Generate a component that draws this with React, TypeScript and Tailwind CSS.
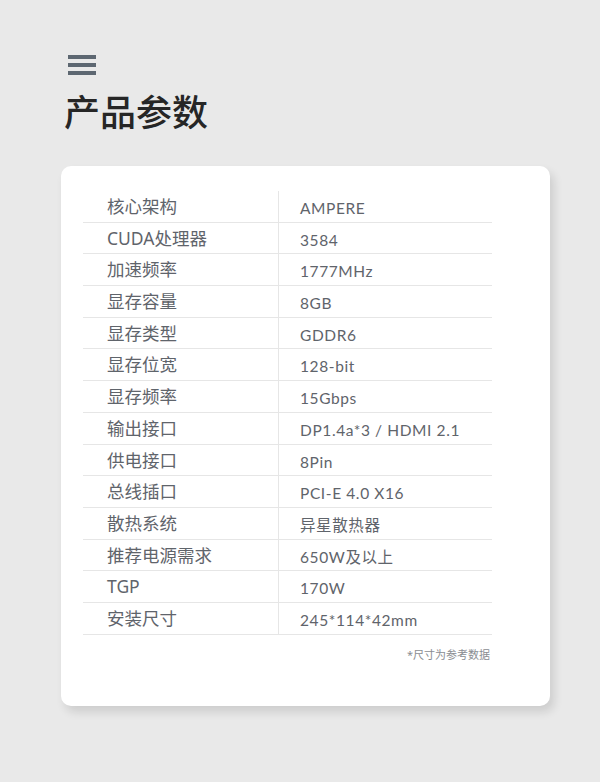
const specs: [string, string][] = [
  ["核心架构", "AMPERE"],
  ["CUDA处理器", "3584"],
  ["加速频率", "1777MHz"],
  ["显存容量", "8GB"],
  ["显存类型", "GDDR6"],
  ["显存位宽", "128-bit"],
  ["显存频率", "15Gbps"],
  ["输出接口", "DP1.4a*3 / HDMI 2.1"],
  ["供电接口", "8Pin"],
  ["总线插口", "PCI-E 4.0 X16"],
  ["散热系统", "异星散热器"],
  ["推荐电源需求", "650W及以上"],
  ["TGP", "170W"],
  ["安装尺寸", "245*114*42mm"],
];

export default function App() {
  return (
    <div
      className="w-[600px] h-[782px] bg-[#e9e9e9] pt-[55px] px-[61px]"
      style={{ fontFamily: '"Noto Sans", "Noto Sans CJK SC", sans-serif' }}
    >
      <div className="flex flex-col gap-[4px] w-[28px] ml-[7px]">
        <span className="block h-[4px] bg-[#5d6771]" />
        <span className="block h-[4px] bg-[#5d6771]" />
        <span className="block h-[4px] bg-[#5d6771]" />
      </div>
      <h1 className="mt-[16px] ml-[3px] text-[36px] leading-[44px] font-medium text-[#262626]">
        产品参数
      </h1>
      <div className="mt-[31px] w-[489px] h-[540px] bg-white rounded-[10px] shadow-[4px_6px_10px_rgba(0,0,0,0.12)] pt-[25px] pl-[22px]">
        <div className="w-[409px]">
          {specs.map(([k, v]) => (
            <div key={k} className="flex h-[31.7px] border-b border-[#e6e6e6]">
              <div className="w-[196px] pl-[24px] border-r border-[#e6e6e6] text-[17.5px] leading-[31px] text-[#5f646b] whitespace-nowrap">
                {k}
              </div>
              <div
                className="pl-[21px] pt-[2px] text-[15.5px] leading-[30px] text-[#5f646b] whitespace-nowrap tracking-[0.6px]"
                style={{ fontFamily: 'Lato, "Noto Sans CJK SC", sans-serif' }}
              >
                {v}
              </div>
            </div>
          ))}
          <div className="mt-[12px] text-right text-[11px] text-[#8a8d92] pr-[2px]">
            *尺寸为参考数据
          </div>
        </div>
      </div>
    </div>
  );
}
